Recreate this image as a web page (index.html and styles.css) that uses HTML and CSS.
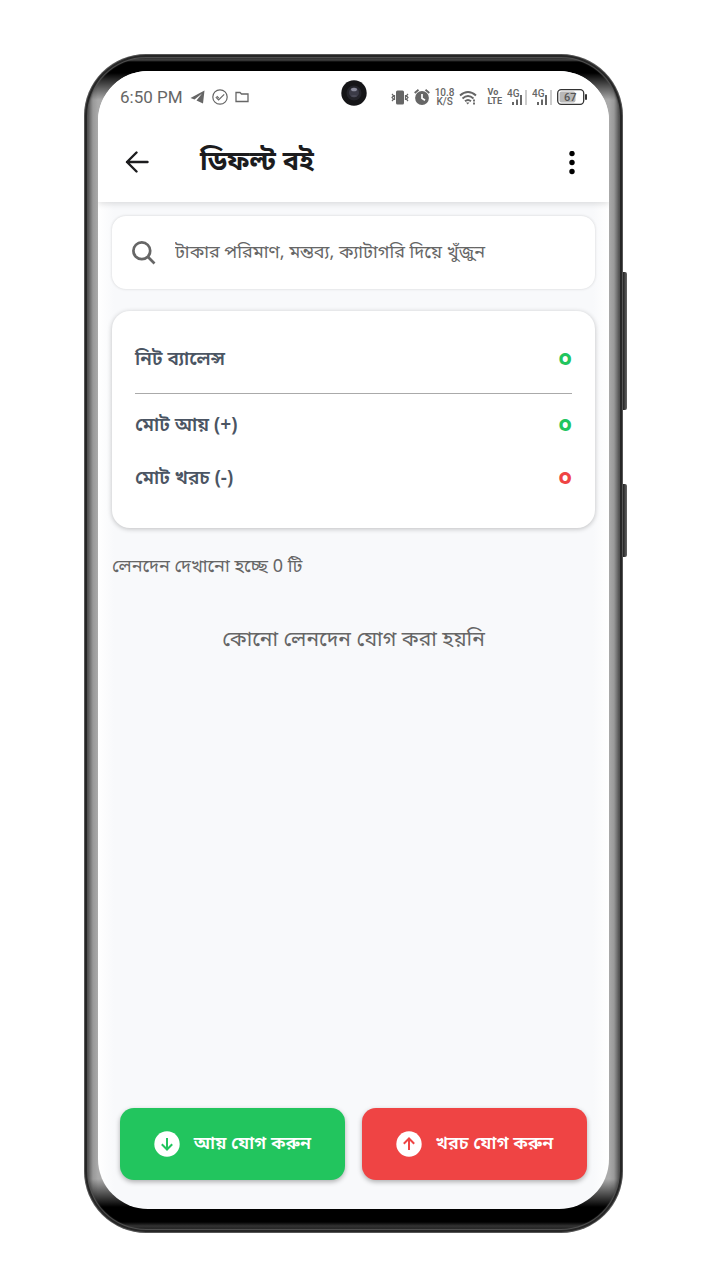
FILE: index.html
```html
<!DOCTYPE html>
<html lang="bn">
<head>
<meta charset="utf-8">
<meta name="viewport" content="width=device-width, initial-scale=1">
<title>ডিফল্ট বই</title>
<link rel="stylesheet" href="styles.css">
</head>
<body>
<div class="phone">
  <div class="screen">
    <div class="status-bar">
      <div class="status-left">
        <span class="clock">6:50 PM</span>
        <svg width="15" height="14" viewBox="0 0 15 14"><path d="M14.500 0.500 0.500 8 4.500 9.500 12 3.500 6.500 10.500 13 13.500Z" fill="#666"/></svg>
        <svg width="16" height="16" viewBox="0 0 16 16" fill="none" stroke="#666" stroke-width="1.200"><circle cx="8" cy="8" r="7.200"/><path d="M3.800 8.200 6.600 11l5.600-5.600M4.800 7.200l2 2"/></svg>
        <svg width="14" height="12" viewBox="0 0 14 12" fill="none" stroke="#666" stroke-width="1.300"><path d="M1 10.500V1.500h4L6.500 3H13v7.500H1Z"/></svg>
      </div>
      <div class="status-right">
        <svg width="18" height="15" viewBox="0 0 18 15"><rect x="5" y="0.500" width="8" height="14" rx="1.500" fill="#666"/><path d="M1 4l1.500 1.700L1 7.500l1.500 1.700L1 11M3.500 5v5M17 4l-1.500 1.700L17 7.500l-1.500 1.700L17 11M14.500 5v5" stroke="#666" stroke-width="1.200" fill="none"/></svg>
        <svg width="16" height="16" viewBox="0 0 16 16"><circle cx="8" cy="9" r="6.900" fill="#666"/><path d="M0.700 4 4.500 0.800M15.300 4l-3.800-3.200" stroke="#666" stroke-width="1.800"/><path d="M8 5v4.300l3 2" stroke="#fff" stroke-width="1.700" fill="none"/></svg>
        <span class="stack stack-speed">10.8<br>K/S</span>
        <svg class="wifi" width="18" height="15" viewBox="0 0 18 15" fill="none" stroke="#666" stroke-width="1.900"><path d="M1 5.500q8-7 16 0M3.500 8.500q5.500-5 11 0M6 11.300q3-2.600 6 0"/><path d="M7 12.500l1.700 2 1.700-2Z" fill="#666" stroke="none"/><path d="M15 9.500v5.500" stroke-dasharray="2 1"/></svg>
        <span class="stack stack-bold">Vo<br>LTE</span>
        <svg width="20" height="16" viewBox="0 0 20 16"><text class="net" x="0" y="8">4G</text><path d="M5 13h2v3H5zM9 10.500h2V16H9zM13 6h2v10h-2z" fill="#666"/><path d="M18 1h2v15h-2z" fill="#ccc"/></svg>
        <svg width="20" height="16" viewBox="0 0 20 16"><text class="net" x="0" y="8">4G</text><path d="M5 13h2v3H5zM9 10.500h2V16H9zM13 6h2v10h-2z" fill="#666"/><path d="M18 1h2v15h-2z" fill="#ccc"/></svg>
        <svg width="30" height="16" viewBox="0 0 30 16"><rect x="0.700" y="0.700" width="26" height="14.600" rx="3.500" fill="#fff" stroke="#333" stroke-width="1.300"/><rect x="2.500" y="2.500" width="16" height="11" rx="2" fill="#b8b8b8"/><rect x="28" y="5" width="2" height="6" rx="1" fill="#333"/><text class="charge" x="7" y="12">67</text></svg>
      </div>
      <svg class="camera" width="26" height="26" viewBox="0 0 26 26"><circle cx="13" cy="13" r="12.700" fill="#151517"/><circle cx="13" cy="13" r="7.500" fill="#24242a"/><circle cx="13" cy="12.500" r="5" fill="#3b3b47"/><ellipse cx="13" cy="9.500" rx="3" ry="1.800" fill="#8b8c9c"/><ellipse cx="13" cy="16" rx="3" ry="1" fill="#4c4c58"/></svg>
    </div>
    <header class="app-bar">
      <button class="icon-button" aria-label="পেছনে"><svg width="24" height="24" viewBox="0 0 24 24" fill="none" stroke="#1c1c1e" stroke-width="2.400" stroke-linecap="round" stroke-linejoin="round"><path d="M22.500 11H2M11.500 1.500 2 11l9.500 9.500"/></svg></button>
      <h1 class="title">ডিফল্ট বই</h1>
      <button class="icon-button" aria-label="মেনু"><svg width="24" height="24" viewBox="0 0 24 24"><circle cx="12" cy="2.500" r="2.700"/><circle cx="12" cy="11.500" r="2.700"/><circle cx="12" cy="20.500" r="2.700"/></svg></button>
    </header>
    <main class="content">
      <label class="search">
        <svg width="24" height="24" viewBox="0 0 24 24" fill="none" stroke="#666" stroke-width="2.700"><circle cx="9.800" cy="9.800" r="8.400"/><path d="m15.800 15.800 6.700 6.700"/></svg>
        <input class="search-input" type="search" aria-label="খুঁজুন" placeholder="টাকার পরিমাণ, মন্তব্য, ক্যাটাগরি দিয়ে খুঁজুন">
      </label>
      <section class="summary">
        <div class="row row-net"><span>নিট ব্যালেন্স</span><span class="amount income">০</span></div>
        <div class="row"><span>মোট আয় (+)</span><span class="amount income">০</span></div>
        <div class="row"><span>মোট খরচ (-)</span><span class="amount expense">০</span></div>
      </section>
      <p class="count">লেনদেন দেখানো হচ্ছে 0 টি</p>
      <p class="empty">কোনো লেনদেন যোগ করা হয়নি</p>
    </main>
    <footer class="actions">
      <button class="action add-income"><svg width="26" height="26" viewBox="0 0 26 26"><circle cx="13" cy="13" r="12.700" fill="#fff"/><path d="M13 7v11.500M7.800 13.300l5.200 5.200 5.200-5.200" fill="none" stroke="#22c55e" stroke-width="2"/></svg>আয় যোগ করুন</button>
      <button class="action add-expense"><svg width="26" height="26" viewBox="0 0 26 26"><circle cx="13" cy="13" r="12.700" fill="#fff"/><path d="M13 19V7.500M7.800 12.700 13 7.500l5.200 5.200" fill="none" stroke="#ef4444" stroke-width="2"/></svg>খরচ যোগ করুন</button>
    </footer>
  </div>
</div>
</body>
</html>
```
FILE: styles.css
```css
* { box-sizing: border-box; }
body {
  margin: 0;
  min-height: 100vh;
  padding: 54px 83px 47px 84px;
  display: flex;
  background: #fff;
  color: #666;
  font-family: "Noto Sans Bengali", "Hind Siliguri", "Noto Sans", sans-serif;
}
h1, p { margin: 0; }
button { border: 0; padding: 0; font: inherit; cursor: pointer; }
svg { display: block; flex: none; }
.phone {
  position: relative;
  flex: 1;
  display: flex;
  padding: 17px 14px 24px;
  border-radius: 62px;
  background:
    linear-gradient(to bottom, #555 0, #222 3px, #444 6px, #000 8px, #000 19px, transparent 46px),
    linear-gradient(to top, #555 0, #222 4px, #333 7px, #000 11px, #000 26px, transparent 54px),
    linear-gradient(to right, #333 0, #777 2px, #111 3px, #555 4px, #999 9px, #aaa 14px, #aaa calc(100% - 14px), #999 calc(100% - 9px), #555 calc(100% - 4px), #111 calc(100% - 3px), #777 calc(100% - 2px), #333 100%);
  box-shadow: inset 0 0 0 1px #555, inset 0 0 0 3px #262626, inset 0 0 1px 4px #555;
}
.phone::before, .phone::after {
  content: "";
  position: absolute;
  left: 100%;
  width: 4px;
  border-radius: 0 2px 2px 0;
  background: linear-gradient(to right, #222, #666);
}
.phone::before { top: 218px; height: 138px; }
.phone::after { top: 430px; height: 73px; }
.screen {
  flex: 1;
  min-width: 0;
  display: flex;
  flex-direction: column;
  overflow: hidden;
  border-radius: 50px;
  background: linear-gradient(to right, #fff, #f8f9fb 16px, #f8f9fb calc(100% - 16px), #fff);
}
.status-bar {
  position: relative;
  display: flex;
  justify-content: space-between;
  align-items: center;
  height: 52px;
  padding: 0 22px;
  background: #fff;
  font-family: Roboto, sans-serif;
}
.status-left, .status-right { display: flex; align-items: center; gap: 7px; }
.status-right { gap: 5px; }
.clock { font-size: 17px; line-height: 20px; }
.stack { font-size: 9px; line-height: 9px; text-align: center; font-weight: 500; }
.stack-speed { font-size: 10px; }
.stack-bold { font-weight: 700; text-align: left; }
.wifi { margin-right: 5px; }
.net { font: 500 10px Roboto, sans-serif; fill: #666; }
.charge { font: 500 11px Roboto, sans-serif; fill: #555; }
.camera { position: absolute; left: calc(50% - 13px); top: 9px; }
.app-bar {
  display: flex;
  align-items: center;
  height: 79px;
  padding: 0 25px 0 27px;
  background: #fff;
  box-shadow: 0 2px 6px rgba(0, 0, 0, .12);
}
.icon-button { background: none; }
.title {
  flex: 1;
  padding-left: 51px;
  color: #1c1c1e;
  font-size: 27px;
  line-height: 36px;
  font-weight: 700;
}
.content { flex: 1; padding: 14px; }
.search {
  display: flex;
  align-items: center;
  gap: 19px;
  height: 73px;
  padding: 0 20px;
  border-radius: 14px;
  background: #fff;
  box-shadow: 0 0 3px rgba(0, 0, 0, .16);
}
.search-input {
  flex: 1;
  min-width: 0;
  border: 0;
  padding: 0;
  outline: 0;
  background: none;
  color: #666;
  font: 18px/32px "Noto Sans Bengali", "Noto Sans", sans-serif;
}
.search-input::placeholder { color: #666; opacity: 1; }
.summary {
  margin-top: 22px;
  padding: 17px 23px 22px;
  border-radius: 18px;
  background: #fff;
  box-shadow: 0 1px 5px rgba(0, 0, 0, .24);
}
.row {
  display: flex;
  align-items: center;
  justify-content: space-between;
  height: 53px;
  color: #4b5563;
  font-size: 19px;
  line-height: 32px;
  font-weight: 600;
}
.row-net { height: 66px; margin-bottom: 6px; border-bottom: 1px solid #aaa; }
.amount { font-size: 23px; font-weight: 700; }
.income { color: #22c55e; }
.expense { color: #ef4444; }
.count { margin-top: 23px; font-size: 18px; line-height: 32px; }
.empty { margin-top: 38px; font-size: 21px; line-height: 40px; text-align: center; }
.actions { display: flex; gap: 17px; padding: 0 22px 29px; }
.action {
  flex: 1;
  display: flex;
  align-items: center;
  justify-content: center;
  gap: 14px;
  height: 72px;
  border-radius: 14px;
  color: #fff;
  font-size: 18px;
  line-height: 32px;
  font-weight: 600;
  box-shadow: 0 2px 5px rgba(0, 0, 0, .3);
}
.add-income { background: #22c55e; }
.add-expense { background: #ef4444; }
```
